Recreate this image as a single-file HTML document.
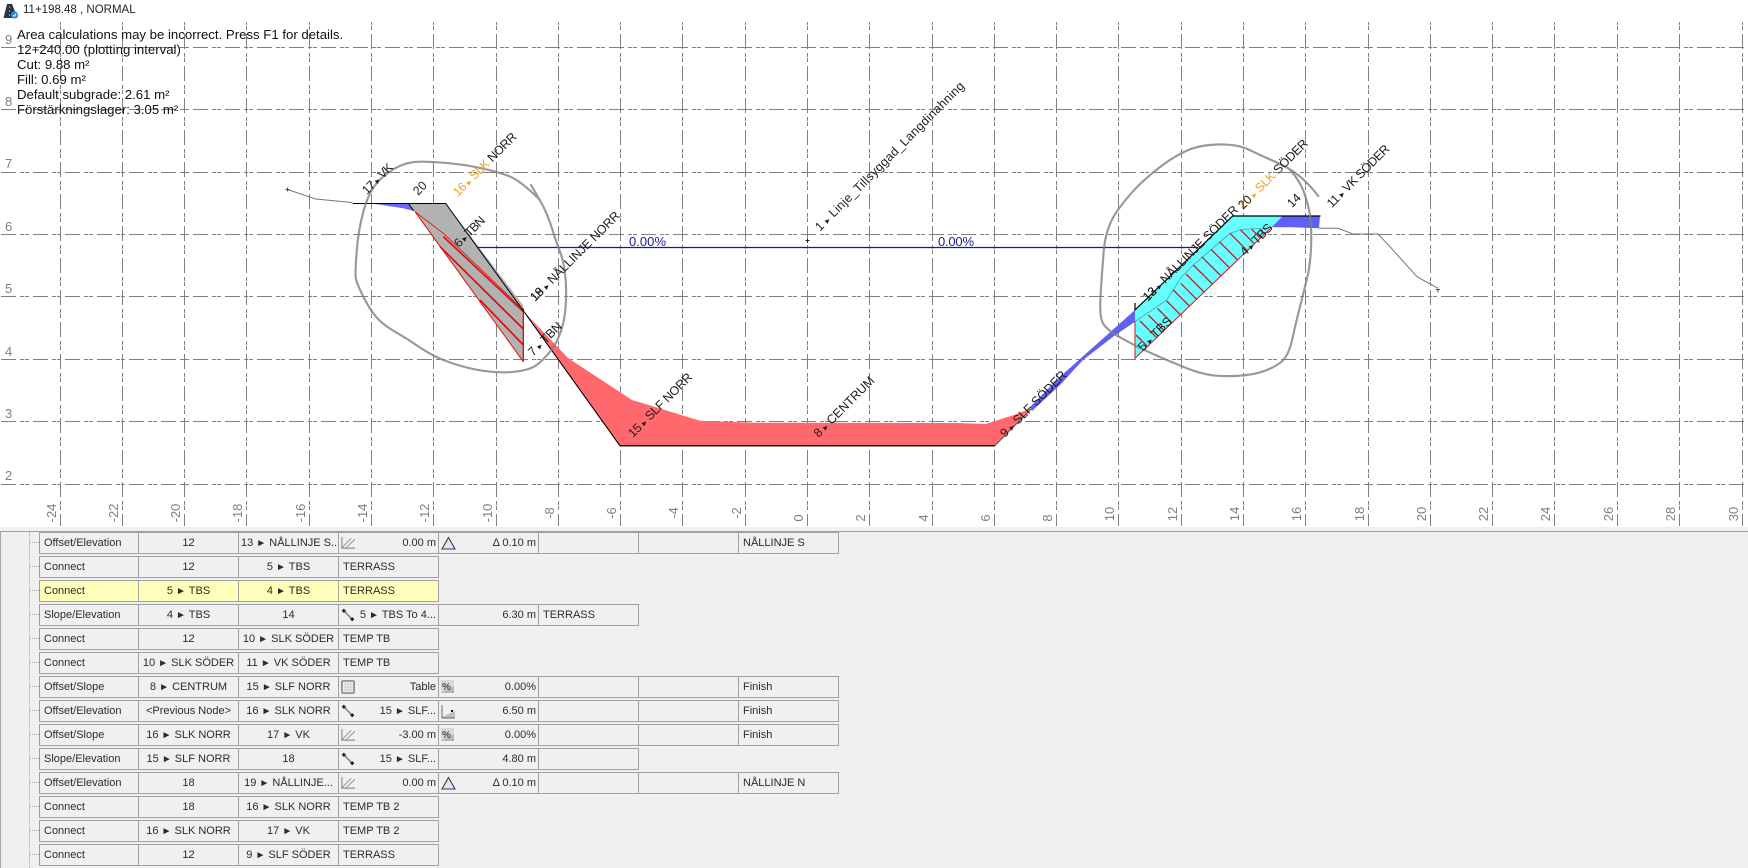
<!DOCTYPE html>
<html lang="sv">
<head>
<meta charset="utf-8">
<title>11+198.48 , NORMAL</title>
<style>
html,body{margin:0;padding:0;background:#fff;}
body{width:1748px;height:868px;overflow:hidden;position:relative;font-family:"Liberation Sans","DejaVu Sans",sans-serif;color:#000;}
#chart{position:absolute;left:0;top:0;width:1748px;height:527px;}
#chart text{font-family:"Liberation Sans","DejaVu Sans",sans-serif;}
.ttl{position:absolute;left:23px;top:3px;font-size:11.5px;line-height:15px;color:#222;white-space:nowrap;}
.info{position:absolute;left:17px;top:27px;font-size:13.2px;line-height:15px;color:#111;white-space:nowrap;}
#panel{position:absolute;left:0;top:527px;width:1748px;height:341px;background:#f0f0f0;}
#topline{position:absolute;left:0;top:4px;width:1748px;height:1px;background:#a0a0a0;}
#leftline{position:absolute;left:0;top:4px;width:1px;height:337px;background:#a8a8a8;}
#tree{position:absolute;left:29px;top:5px;width:0;height:336px;border-left:1px dotted #aaa;}
.r{position:absolute;left:39px;height:22px;display:flex;font-size:11px;color:#2b2b2b;}
.r>div{box-sizing:border-box;width:101px;height:22px;margin-right:-1px;border:1px solid #a0a0a0;line-height:20px;white-space:nowrap;position:relative;padding:0 2px;overflow:hidden;}
.r>div:first-child{width:100px;padding-left:4px;}
.c{text-align:center;}
.l{padding-left:4px!important;}
.v{text-align:right;padding-right:2px;}
.y>div{background:#ffffb9;}
.a{font-size:10px;vertical-align:0;}
.r svg{position:absolute;left:2px;top:3px;}
.d{position:absolute;left:30px;width:9px;height:0;border-top:1px dotted #aaa;}
</style>
</head>
<body>
<svg id="chart" width="1748" height="527" viewBox="0 0 1748 527">
<defs>
<style>
.gv{stroke:#808080;stroke-width:1;stroke-dasharray:15 4 4 1 4 4;stroke-dashoffset:20;fill:none;}
.gh{stroke:#808080;stroke-width:1;stroke-dasharray:15 4 4 1 4 4;stroke-dashoffset:-1;fill:none;}
.tk{fill:#808080;font-size:13px;}
.lb{fill:#1c1c1c;font-size:12.4px;}
.lb .t{font-size:9px;}
</style>
</defs>
<g class="gh">
<path d="M0 47.5H1744"/><path d="M0 109.5H1744"/><path d="M0 172.5H1744"/><path d="M0 234.5H1744"/><path d="M0 296.5H1744"/><path d="M0 359.5H1744"/><path d="M0 421.5H1744"/><path d="M0 484.5H1744"/>
</g>
<g class="gv">
<path d="M60.5 22V526"/><path d="M122.5 22V526"/><path d="M184.5 22V526"/><path d="M246.5 22V526"/><path d="M309.5 22V526"/><path d="M371.5 22V526"/><path d="M433.5 22V526"/><path d="M496.5 22V526"/><path d="M558.5 22V526"/><path d="M620.5 22V526"/><path d="M682.5 22V526"/><path d="M745.5 22V526"/><path d="M807.5 22V526"/><path d="M869.5 22V526"/><path d="M932.5 22V526"/><path d="M994.5 22V526"/><path d="M1056.5 22V526"/><path d="M1118.5 22V526"/><path d="M1181.5 22V526"/><path d="M1243.5 22V526"/><path d="M1305.5 22V526"/><path d="M1368.5 22V526"/><path d="M1430.5 22V526"/><path d="M1492.5 22V526"/><path d="M1554.5 22V526"/><path d="M1617.5 22V526"/><path d="M1679.5 22V526"/><path d="M1742.5 22V526"/>
</g>
<g class="tk">
<text x="5" y="44">9</text><text x="5" y="106">8</text><text x="5" y="168">7</text><text x="5" y="231">6</text><text x="5" y="293">5</text><text x="5" y="356">4</text><text x="5" y="418">3</text><text x="5" y="480">2</text>
</g>
<g class="tk" text-anchor="middle">
<text transform="translate(56 513) rotate(-90)">-24</text>
<text transform="translate(118 513) rotate(-90)">-22</text>
<text transform="translate(180 513) rotate(-90)">-20</text>
<text transform="translate(242 513) rotate(-90)">-18</text>
<text transform="translate(305 513) rotate(-90)">-16</text>
<text transform="translate(367 513) rotate(-90)">-14</text>
<text transform="translate(429 513) rotate(-90)">-12</text>
<text transform="translate(492 513) rotate(-90)">-10</text>
<text transform="translate(554 513) rotate(-90)">-8</text>
<text transform="translate(616 513) rotate(-90)">-6</text>
<text transform="translate(678 513) rotate(-90)">-4</text>
<text transform="translate(741 513) rotate(-90)">-2</text>
<text transform="translate(803 518) rotate(-90)">0</text>
<text transform="translate(865 518) rotate(-90)">2</text>
<text transform="translate(928 518) rotate(-90)">4</text>
<text transform="translate(990 518) rotate(-90)">6</text>
<text transform="translate(1052 518) rotate(-90)">8</text>
<text transform="translate(1114 514) rotate(-90)">10</text>
<text transform="translate(1177 514) rotate(-90)">12</text>
<text transform="translate(1239 514) rotate(-90)">14</text>
<text transform="translate(1301 514) rotate(-90)">16</text>
<text transform="translate(1364 514) rotate(-90)">18</text>
<text transform="translate(1426 514) rotate(-90)">20</text>
<text transform="translate(1488 514) rotate(-90)">22</text>
<text transform="translate(1550 514) rotate(-90)">24</text>
<text transform="translate(1613 514) rotate(-90)">26</text>
<text transform="translate(1675 514) rotate(-90)">28</text>
<text transform="translate(1738 514) rotate(-90)">30</text>
</g>

<!-- ground lines -->
<path d="M287.5 189.5L315.7 199L352 202.5" fill="none" stroke="#777" stroke-width="1"/>
<path d="M285.5 189.5h4M287.5 187.5v4" stroke="#c01818" stroke-width="1"/>
<path d="M1319 228.3H1338L1353 234H1378L1390 246.7L1417 276.7L1438 288.3" fill="none" stroke="#777" stroke-width="1"/>
<path d="M1436 289.5h4M1438 289.5v3" stroke="#c01818" stroke-width="1"/>

<!-- left section -->
<polygon points="371.7,203.5 408.3,203.5 414,211 403,208.3 386.7,205.7" fill="#6a6af4"/>
<polygon points="408,204 446,204 523,305 523.3,361.7 415,211.7" fill="#b2b2b2"/>
<g transform="translate(300 130) scale(.33333)" fill="none" stroke="#e00c0c">
<path d="M345 245L430 310L660 530" stroke-width="2.4"/>
<path d="M430 320L670 545" stroke-width="5"/>
<path d="M420 350L670 597" stroke-width="5"/>
<path d="M540 510L670 645" stroke-width="5"/>
<path d="M345 245L670 695" stroke-width="3"/>
<path d="M670 535V695" stroke-width="4"/>
</g>
<path d="M352.7 203.5H445.7L525 313L620 445.7H994.6L1032 408" fill="none" stroke="#000" stroke-width="1"/>
<path d="M408.3 203.5L414 211" fill="none" stroke="#000"/>

<!-- red fill -->
<polygon points="525,313 530,318 568,358 632,400 700,420.7 755,422.7 957,423 985.7,424 1014,415 1032,408 994.6,445.7 620,445.7" fill="#ff686c"/>
<path d="M620 445.7H994.6" stroke="#000" stroke-width="1.4"/>
<path d="M525 313L620 445.7" stroke="#000" stroke-width="1"/>

<!-- right blue lower -->
<polygon points="1030,407 1060,376.7 1135,310 1135,321.7 1113,336.7 1083,360 1060,385 1032,411" fill="#6060f0"/>
<!-- cyan -->
<polygon points="1135,310 1232.7,216 1282.7,216 1271.7,227.3 1135,358.3" fill="#66ffff"/>
<polygon points="1282.7,216 1320,216 1319,228.3 1291.7,227.3 1271.7,227.3" fill="#6060f4"/>
<path d="M1135 303V310L1232.7 216H1320.5" fill="none" stroke="#000" stroke-width="1.2"/>
<g transform="translate(1060 120) scale(.33333)" fill="none">
<path d="M225 605L320 540L365 470L400 435L510 340L545 328L620 325" stroke="#4a8a90" stroke-width="2"/>
<g stroke="#d01a24" stroke-width="4">
<path d="M225 605V715L635 322" stroke-width="3"/>
<path d="M228 645L262 679M240 603L290 653M265 585L312 632M292 565L336 609M320 543L361 584M340 510L388 558M362 490L410 538M378 462L432 516M400 435L457 492M425 410L483 468M453 388L508 443M478 365L533 420M510 340L562 392M542 330L583 371M575 328L601 354M600 328L614 342"/>
</g>
</g>

<!-- design line -->
<path d="M478 247.5H1198" stroke="#1a1a96" stroke-width="1.2"/>
<path d="M807.5 239V243M805.5 240.5h4" stroke="#222" stroke-width="1"/>
<text x="629" y="246" fill="#1a1a96" font-size="13" textLength="37">0.00%</text>
<text x="938" y="246" fill="#1a1a96" font-size="13" textLength="36">0.00%</text>

<!-- hand drawn -->
<g transform="translate(300 130) scale(.33333)">
<path d="M693 165Q720 210 732.5 235Q745 260 757.5 300Q770 340 780 365Q790 390 795 430Q800 470 797.5 520Q795 570 782.5 605Q770 640 750 665Q730 690 710 705Q690 720 645 725Q600 730 550 722.5Q500 715 450 697.5Q400 680 360 652.5Q320 625 285 605Q250 585 230 562.5Q210 540 190 500Q170 460 167.5 445Q165 430 170 365Q175 300 190 245Q205 190 227.5 162.5Q250 135 285 115Q320 95 360 95Q400 95 450 100Q500 105 545 115Q590 125 625 137.5Q660 150 720 210" fill="none" stroke="#808080" stroke-opacity=".8" stroke-width="6.5" stroke-linejoin="round" stroke-linecap="round"/>
</g>
<g transform="translate(1060 120) scale(.33333)">
<path d="M775 228Q745 190 717.5 167.5Q690 145 645 125Q600 105 565 88.5Q530 72 475 73.5Q420 75 385 90Q350 105 315 130Q280 155 245 187.5Q210 220 173.5 270Q137 320 131 395Q125 470 121.5 530Q118 590 129 610Q140 630 185 655Q230 680 275 700Q320 720 375 742.5Q430 765 475 767.5Q520 770 560 765Q600 760 632.5 745Q665 730 677.5 710Q690 690 697.5 655Q705 620 717.5 570Q730 520 740 480Q750 440 752.5 395Q755 350 752.5 310Q750 270 735 225Q720 180 685 145" fill="none" stroke="#808080" stroke-opacity=".8" stroke-width="6.5" stroke-linejoin="round" stroke-linecap="round"/>
</g>

<!-- labels -->
<g class="lb">
<text transform="translate(367 195) rotate(-45)" textLength="38">17 <tspan class="t">▸</tspan> VK</text>
<text transform="translate(418 196) rotate(-45)">20</text>
<text transform="translate(458 197) rotate(-45)" textLength="84"><tspan fill="#eea51e">16 <tspan class="t">▸</tspan> SLK</tspan> NORR</text>
<text transform="translate(459 248) rotate(-45)" textLength="38">6 <tspan class="t">▸</tspan> TBN</text>
<text transform="translate(535 302) rotate(-45)" textLength="121">19 <tspan class="t">▸</tspan> NÅLLINJE NORR</text>
<text transform="translate(535 302) rotate(-45)">18</text>
<text transform="translate(533 356.7) rotate(-45)" textLength="42">7 <tspan class="t">▸</tspan> TBN</text>
<text transform="translate(633 438) rotate(-45)" textLength="85">15 <tspan class="t">▸</tspan> SLF NORR</text>
<text transform="translate(818.6 438) rotate(-45)" textLength="80">8 <tspan class="t">▸</tspan> CENTRUM</text>
<text transform="translate(1005 438) rotate(-45)" textLength="88">9 <tspan class="t">▸</tspan> SLF SÖDER</text>
<text transform="translate(820 231.7) rotate(-45)" textLength="205">1 <tspan class="t">▸</tspan> Linje_Tillsyggad_Langdinahning</text>
<text transform="translate(1147.7 301.7) rotate(-45)" textLength="129">13 <tspan class="t">▸</tspan> NÅLLINJE SÖDER</text>
<text transform="translate(1147.7 301.7) rotate(-45)">12</text>
<text transform="translate(1243 210) rotate(-45)" textLength="93"><tspan fill="#eea51e">10 <tspan class="t">▸</tspan> SLK</tspan> SÖDER</text>
<text transform="translate(1243 210) rotate(-45)">20</text>
<text transform="translate(1292 208.3) rotate(-45)">14</text>
<text transform="translate(1331.7 208.3) rotate(-45)" textLength="83">11 <tspan class="t">▸</tspan> VK SÖDER</text>
<text transform="translate(1245 256.7) rotate(-45)" textLength="40">4 <tspan class="t">▸</tspan> TBS</text>
<text transform="translate(1143 351.7) rotate(-45)" textLength="42">5 <tspan class="t">▸</tspan> TBS</text>
</g>
<!-- logo -->
<path d="M7 4H12L17.5 18H3.5Z" fill="#2a3648"/>
<path d="M9.5 6V8M9.5 10V12M9.5 14V16" stroke="#8c96a6" stroke-width="1"/>
<circle cx="14.5" cy="15" r="3.6" fill="#2a8fe0"/>
<path d="M13 15l1.2 1.2L16 14" stroke="#fff" stroke-width="1" fill="none"/>
</svg>

<div class="ttl">11+198.48 , NORMAL</div>
<div class="info">Area calculations may be incorrect. Press F1 for details.<br>12+240.00 (plotting interval)<br>Cut: 9.88 m²<br>Fill: 0.69 m²<br>Default subgrade: 2.61 m²<br>Förstärkningslager: 3.05 m²</div>

<svg width="0" height="0" style="position:absolute">
<symbol id="i-slope" viewBox="0 0 15 15"><path d="M1 1V13H15" fill="none" stroke="#777"/><path d="M1.5 12L11 2.5M5.5 12.5L15 3.5" fill="none" stroke="#8e8e8e"/></symbol>
<symbol id="i-tri" viewBox="0 0 15 15"><path d="M7.5 1.5L14 13H1Z" fill="#e6e6f6" stroke="#3a3a4e" stroke-width="1.1"/></symbol>
<symbol id="i-arr" viewBox="0 0 15 15"><path d="M3 3L12 12" stroke="#8c8c8c" stroke-width="1.8"/><path d="M1 3h4M3 1v4M10 12h4M12 10v4" stroke="#222" stroke-width="1.7"/></symbol>
<symbol id="i-tab" viewBox="0 0 15 15"><path d="M3 4.5H13M3 7.5H13M3 10.5H13M4.5 2V13M7.5 2V13M10.5 2V13" stroke="#cfcfcf" stroke-width="1"/><rect x="1" y="1" width="13" height="13" rx="1" fill="none" stroke="#3c3c3c"/></symbol>
<symbol id="i-el" viewBox="0 0 15 15"><path d="M1 13L14 7V14H1Z" fill="#bcbccc"/><path d="M1 1V14H14" fill="none" stroke="#666"/><rect x="10" y="6" width="2" height="2" fill="#111"/></symbol>
</svg>

<div id="panel">
<div id="topline"></div><div id="leftline"></div><div id="tree"></div>
<div class="d" style="top:15px"></div><div class="d" style="top:39px"></div><div class="d" style="top:63px"></div><div class="d" style="top:87px"></div><div class="d" style="top:111px"></div><div class="d" style="top:135px"></div><div class="d" style="top:159px"></div><div class="d" style="top:183px"></div><div class="d" style="top:207px"></div><div class="d" style="top:231px"></div><div class="d" style="top:255px"></div><div class="d" style="top:279px"></div><div class="d" style="top:303px"></div><div class="d" style="top:327px"></div>

<div class="r" style="top:5px"><div>Offset/Elevation</div><div class="c">12</div><div class="c">13 <span class="a">►</span> NÅLLINJE S...</div><div class="v"><svg width="14" height="14"><use href="#i-slope"/></svg>0.00 m</div><div class="v"><svg width="15" height="15"><use href="#i-tri"/></svg>Δ 0.10 m</div><div></div><div></div><div class="l">NÅLLINJE S</div></div>
<div class="r" style="top:29px"><div>Connect</div><div class="c">12</div><div class="c">5 <span class="a">►</span> TBS</div><div class="l">TERRASS</div></div>
<div class="r y" style="top:53px"><div>Connect</div><div class="c">5 <span class="a">►</span> TBS</div><div class="c">4 <span class="a">►</span> TBS</div><div class="l">TERRASS</div></div>
<div class="r" style="top:77px"><div>Slope/Elevation</div><div class="c">4 <span class="a">►</span> TBS</div><div class="c">14</div><div class="v"><svg width="14" height="14"><use href="#i-arr"/></svg>5 <span class="a">►</span> TBS To 4...</div><div class="v">6.30 m</div><div class="l">TERRASS</div></div>
<div class="r" style="top:101px"><div>Connect</div><div class="c">12</div><div class="c">10 <span class="a">►</span> SLK SÖDER</div><div class="l">TEMP TB</div></div>
<div class="r" style="top:125px"><div>Connect</div><div class="c">10 <span class="a">►</span> SLK SÖDER</div><div class="c">11 <span class="a">►</span> VK SÖDER</div><div class="l">TEMP TB</div></div>
<div class="r" style="top:149px"><div>Offset/Slope</div><div class="c">8 <span class="a">►</span> CENTRUM</div><div class="c">15 <span class="a">►</span> SLF NORR</div><div class="v"><svg width="14" height="14"><use href="#i-tab"/></svg>Table</div><div class="v"><svg width="13" height="13"><rect width="13" height="13" fill="#d8d8e4"/><path d="M0 13L13 6V13Z" fill="#b4b4c6"/><text x="1" y="10" font-size="10" font-weight="bold" fill="#4a4a55" font-family="Liberation Sans">%</text></svg>0.00%</div><div></div><div></div><div class="l">Finish</div></div>
<div class="r" style="top:173px"><div>Offset/Elevation</div><div class="c">&lt;Previous Node&gt;</div><div class="c">16 <span class="a">►</span> SLK NORR</div><div class="v"><svg width="14" height="14"><use href="#i-arr"/></svg>15 <span class="a">►</span> SLF...</div><div class="v"><svg width="15" height="15"><use href="#i-el"/></svg>6.50 m</div><div></div><div></div><div class="l">Finish</div></div>
<div class="r" style="top:197px"><div>Offset/Slope</div><div class="c">16 <span class="a">►</span> SLK NORR</div><div class="c">17 <span class="a">►</span> VK</div><div class="v"><svg width="14" height="14"><use href="#i-slope"/></svg>-3.00 m</div><div class="v"><svg width="13" height="13"><rect width="13" height="13" fill="#d8d8e4"/><path d="M0 13L13 6V13Z" fill="#b4b4c6"/><text x="1" y="10" font-size="10" font-weight="bold" fill="#4a4a55" font-family="Liberation Sans">%</text></svg>0.00%</div><div></div><div></div><div class="l">Finish</div></div>
<div class="r" style="top:221px"><div>Slope/Elevation</div><div class="c">15 <span class="a">►</span> SLF NORR</div><div class="c">18</div><div class="v"><svg width="14" height="14"><use href="#i-arr"/></svg>15 <span class="a">►</span> SLF...</div><div class="v">4.80 m</div><div></div></div>
<div class="r" style="top:245px"><div>Offset/Elevation</div><div class="c">18</div><div class="c">19 <span class="a">►</span> NÅLLINJE...</div><div class="v"><svg width="14" height="14"><use href="#i-slope"/></svg>0.00 m</div><div class="v"><svg width="15" height="15"><use href="#i-tri"/></svg>Δ 0.10 m</div><div></div><div></div><div class="l">NÅLLINJE N</div></div>
<div class="r" style="top:269px"><div>Connect</div><div class="c">18</div><div class="c">16 <span class="a">►</span> SLK NORR</div><div class="l">TEMP TB 2</div></div>
<div class="r" style="top:293px"><div>Connect</div><div class="c">16 <span class="a">►</span> SLK NORR</div><div class="c">17 <span class="a">►</span> VK</div><div class="l">TEMP TB 2</div></div>
<div class="r" style="top:317px"><div>Connect</div><div class="c">12</div><div class="c">9 <span class="a">►</span> SLF SÖDER</div><div class="l">TERRASS</div></div>
</div>
</body>
</html>
